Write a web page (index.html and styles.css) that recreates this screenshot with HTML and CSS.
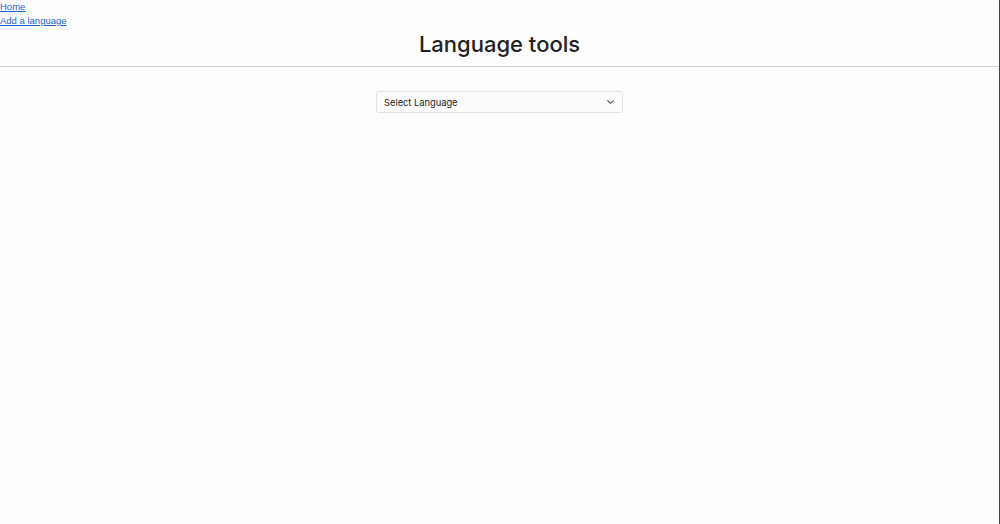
FILE: index.html
```html
<!DOCTYPE html>
<html>
<head>
<meta charset="utf-8">
<link rel="stylesheet" href="styles.css">
</head>
<body>
<div class="page">
  <nav class="nav">
    <a href="#">Home</a>
    <a href="#">Add a language</a>
  </nav>
  <h1 class="title">Language tools</h1>
  <hr class="rule">
  <div class="content">
    <div class="select">
      <span class="select-label">Select Language</span>
      <svg class="chev" width="7" height="4" viewBox="0 0 7 4"><path d="M0.7 0.6l2.8 2.7 2.8-2.7" fill="none" stroke="#555" stroke-width="1.1" stroke-linecap="round" stroke-linejoin="round"/></svg>
    </div>
  </div>
</div>
</body>
</html>
```

FILE: styles.css
```css
html, body {
  margin: 0;
  padding: 0;
  background: #fdfdfd;
}
.page {
  height: 524px;
  box-sizing: border-box;
  border-right: 1px solid #444;
  font-family: Inter, "Liberation Sans", sans-serif;
  color: #222;
}
.nav {
  display: flex;
  flex-direction: column;
  align-items: flex-start;
  font-family: "Liberation Sans", Arial, sans-serif;
  font-size: 9.5px;
  line-height: 14px;
}
.nav a {
  color: #1a66c9;
  text-decoration: underline;
}
.title {
  margin: 1px 0 0 0;
  text-align: center;
  font-size: 22px;
  font-weight: 500;
  line-height: 30px;
  color: #222;
}
.rule {
  margin: 7px 0 0 0;
  border: 0;
  border-top: 1px solid #cfcfcf;
  height: 0;
}
.content {
  display: flex;
  justify-content: center;
  padding-top: 24px;
}
.select {
  width: 247px;
  height: 22px;
  box-sizing: border-box;
  border: 1px solid #e4e4e4;
  border-radius: 3px;
  background: #fcfcfc;
  display: flex;
  align-items: center;
  justify-content: space-between;
  padding: 0 8px 0 7px;
}
.select-label {
  font-size: 9.3px;
  color: #222;
}
.chev {
  display: block;
}
```
